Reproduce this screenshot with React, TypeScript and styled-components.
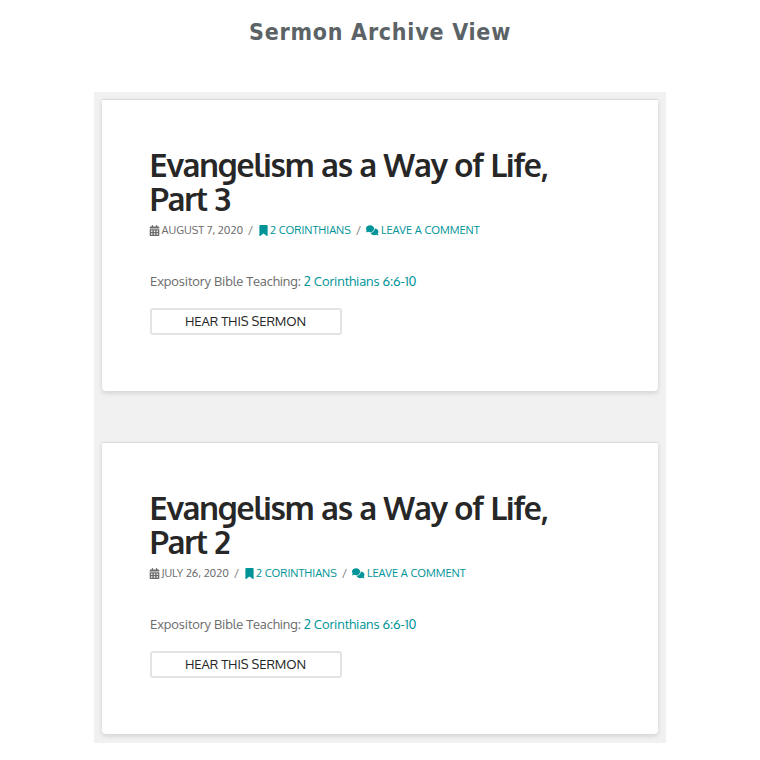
import React from "react";
import styled, { createGlobalStyle } from "styled-components";
import { FaBookmark, FaCalendarDays, FaComments } from "react-icons/fa6";

const GlobalStyle = createGlobalStyle`
  *, *::before, *::after { box-sizing: border-box; }
  body {
    margin: 0;
    background: #fff;
    font-family: "Oxygen", "Noto Sans", sans-serif;
    color: #6c6c6c;
  }
`;

const Page = styled.main`
  display: flex;
  flex-direction: column;
  align-items: center;
  height: 760px;
`;

const PageTitle = styled.h1`
  margin: 0;
  height: 92px;
  padding-top: 18px;
  font: bold 23px/28px "DejaVu Sans Condensed", "DejaVu Sans", sans-serif;
  font-stretch: condensed;
  letter-spacing: 0.75px;
  color: #5b6366;
  white-space: nowrap;
`;

const Archive = styled.section`
  display: flex;
  flex-direction: column;
  gap: 51px;
  width: 572px;
  height: 651px;
  padding: 7px 8px;
  background: #f1f1f1;
`;

const Card = styled.article`
  height: 292px;
  padding: 48px 48px 0;
  border-top: 1px solid #dadada;
  border-radius: 0 0 4px 4px;
  background: #fff;
  box-shadow: 0 2px 5px rgba(0, 0, 0, 0.135);
`;

const Heading = styled.h2`
  margin: 0 0 0 -0.5px;
  font-size: 32px;
  font-weight: 600;
  line-height: 34px;
  letter-spacing: -1.12px;
  color: #272727;
  white-space: nowrap;
`;

const Meta = styled.div`
  display: flex;
  align-items: center;
  height: 16px;
  margin: 6px 0 0 -1px;
  font-size: 11px;
  line-height: 16px;
  text-transform: uppercase;
  white-space: nowrap;
`;

const MetaItem = styled.span<{ $width: number; $gap: number; $link?: boolean }>`
  display: flex;
  align-items: center;
  flex: none;
  gap: ${(p) => p.$gap}px;
  width: ${(p) => p.$width}px;
  letter-spacing: -0.03px;
  color: ${(p) => (p.$link ? "#009499" : "#6c6c6c")};
  svg { flex: none; }
`;

const Slash = styled.span`
  flex: none;
  width: 15px;
  text-align: center;
`;

const Excerpt = styled.p`
  display: flex;
  gap: 3px;
  margin: 32px 0 0;
  font-size: 13px;
  line-height: 22px;
  letter-spacing: -0.1px;
  white-space: nowrap;
`;

const Passage = styled.a`
  color: #009499;
`;

const ListenButton = styled.button`
  display: block;
  width: 192px;
  height: 27px;
  margin-top: 16px;
  padding: 0 1px 1px 0;
  border: 2px solid #e3e3e3;
  border-radius: 3px;
  background: transparent;
  font: 13px/22px "Oxygen", "Noto Sans", sans-serif;
  letter-spacing: -0.1px;
  color: #272727;
`;

const sermons = [
  { part: 3, date: "August 7, 2020", dateWidth: 94 },
  { part: 2, date: "July 26, 2020", dateWidth: 80 },
];

function SermonCard({ part, date, dateWidth }: (typeof sermons)[number]) {
  return (
    <Card>
      <Heading>
        Evangelism as a Way of Life,
        <br />
        Part {part}
      </Heading>
      <Meta>
        <MetaItem $width={dateWidth} $gap={1.5}>
          <FaCalendarDays size={11} />
          {date}
        </MetaItem>
        <Slash>/</Slash>
        <MetaItem $width={93} $gap={1} $link>
          <FaBookmark size={11} />
          2 Corinthians
        </MetaItem>
        <Slash>/</Slash>
        <MetaItem $width={116} $gap={2.5} $link>
          <FaComments size={12.5} />
          Leave a Comment
        </MetaItem>
      </Meta>
      <Excerpt>
        <span>Expository Bible Teaching:</span>
        <Passage>2 Corinthians 6:6-10</Passage>
      </Excerpt>
      <ListenButton>HEAR THIS SERMON</ListenButton>
    </Card>
  );
}

export default function App() {
  return (
    <>
      <GlobalStyle />
      <Page>
        <PageTitle>Sermon Archive View</PageTitle>
        <Archive>
          {sermons.map((sermon) => (
            <SermonCard key={sermon.part} {...sermon} />
          ))}
        </Archive>
      </Page>
    </>
  );
}
